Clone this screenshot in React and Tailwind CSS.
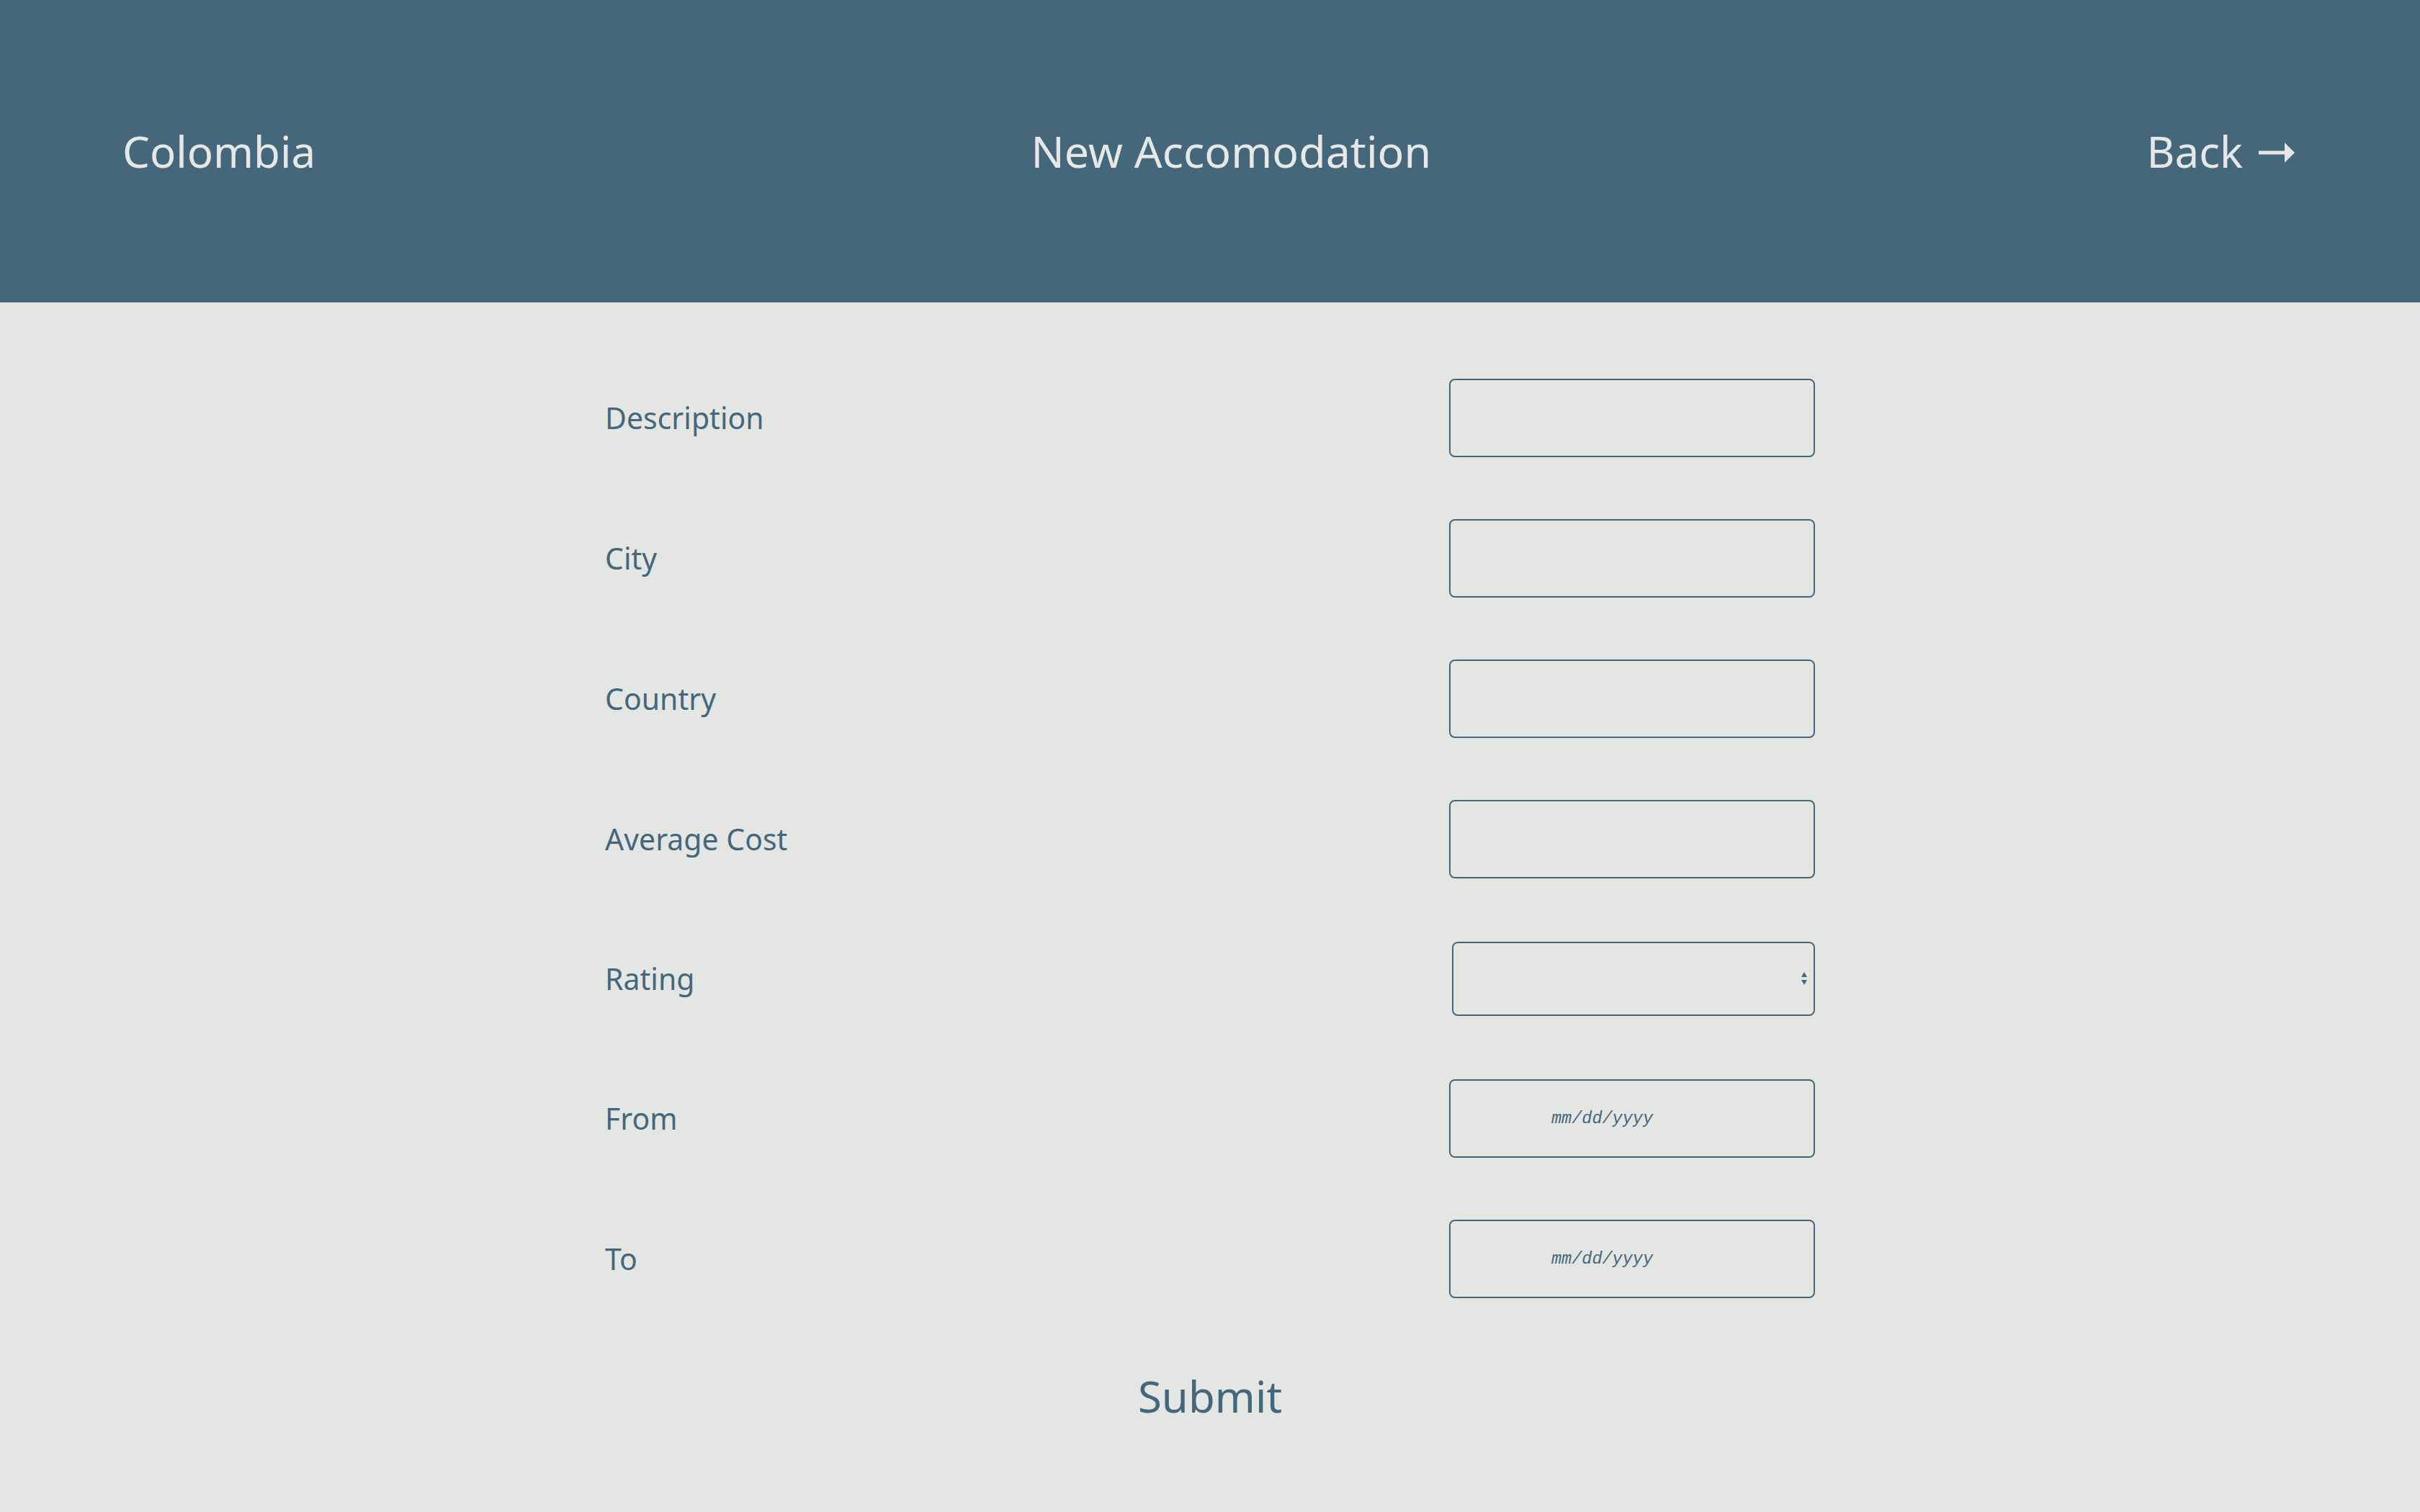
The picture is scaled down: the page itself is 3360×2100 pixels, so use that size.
import React from "react";

const fields = ["Description", "City", "Country", "Average Cost"];

function Row({ label, children, className = "" }) {
  return (
    <div className={"flex items-center justify-between " + className}>
      <label className="text-[41px] leading-none text-[#44677c]">{label}</label>
      {children}
    </div>
  );
}

function DateBox() {
  return (
    <div className="w-[508px] h-[109px] border-2 border-[#44677c] rounded-[8px] flex items-center pl-[140px]">
      <span className="italic text-[23.5px] text-[#44677c]" style={{ fontFamily: '"Liberation Mono", "DejaVu Sans Mono", monospace' }}>
        mm/dd/yyyy
      </span>
    </div>
  );
}

export default function App() {
  return (
    <div className="min-h-[2100px] bg-[#e4e6e3]" style={{ fontFamily: '"Noto Sans", "Open Sans", sans-serif' }}>
      <header className="h-[420px] bg-[#45677c] flex items-center justify-between pl-[170px] pr-[174px] text-[#e6e8e5] text-[60px]">
        <div>Colombia</div>
        <div className="text-[61px]">New Accomodation</div>
        <div className="flex items-center gap-[22px]">
          <span>Back</span>
          <svg width="50" height="28" viewBox="0 0 50 28" className="mt-[4px]">
            <rect x="0" y="11.5" width="37" height="5" fill="#e6e8e5" />
            <polygon points="36,0 50,14 36,28" fill="#e6e8e5" />
          </svg>
        </div>
      </header>
      <form className="w-[1680px] mx-auto pt-[106px] flex flex-col">
        <div className="flex flex-col gap-[86px]">
          {fields.map((f) => (
            <Row key={f} label={f}>
              <input type="text" className="w-[508px] h-[109px] border-2 border-[#44677c] rounded-[8px] bg-transparent outline-none" />
            </Row>
          ))}
          <Row label="Rating" className="mt-[2px]">
            <div className="w-[504px] h-[103px] border-2 border-[#44677c] rounded-[8px] flex items-center justify-end pr-[8px]">
              <svg width="10" height="22" viewBox="0 0 10 22">
                <polygon points="5,1 9,8 1,8" fill="#44677c" />
                <polygon points="1,12 9,12 5,19" fill="#44677c" />
              </svg>
            </div>
          </Row>
          <Row label="From" className="mt-[2px]">
            <DateBox />
          </Row>
          <Row label="To">
            <DateBox />
          </Row>
        </div>
        <button type="button" className="mt-[94px] self-center text-[60px] leading-[84px] text-[#44677c] bg-transparent">
          Submit
        </button>
      </form>
    </div>
  );
}
